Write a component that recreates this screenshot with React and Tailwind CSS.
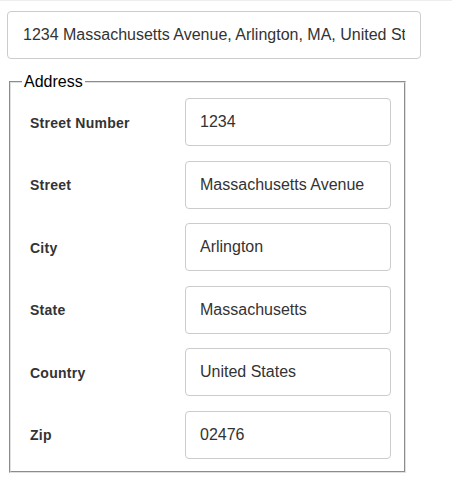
import React from "react";

const fields = [
  { label: "Street Number", value: "1234" },
  { label: "Street", value: "Massachusetts Avenue" },
  { label: "City", value: "Arlington" },
  { label: "State", value: "Massachusetts" },
  { label: "Country", value: "United States" },
  { label: "Zip", value: "02476" },
];

const App = () => {
  return (
    <div className="w-[452px] h-[490px] bg-white border-t border-[#eeeeee] font-['Liberation_Sans',Arial,sans-serif] text-[#333]">
      <div className="pt-[10px] pl-[7px]">
        <input
          readOnly
          value="1234 Massachusetts Avenue, Arlington, MA, United States, 02476"
          className="w-[414px] h-[48px] px-[15px] text-[16px] text-[#333] border border-[#cccccc] rounded-[4px] outline-none"
        />
      </div>

      {/* address breakdown */}
      <fieldset className="mt-[14px] ml-[9px] w-[397px] border-2 [border-style:groove] border-[#e0e0e0] pl-[19px] pr-[13px] pt-[7px] pb-[12px]">
        <legend className="-ml-[8px] px-[2px] text-[16px] leading-[18px] text-black">Address</legend>
        <div className="flex flex-col gap-[14.6px]">
          {fields.map((f) => (
            <div key={f.label} className="flex items-center">
              <label className="w-[155px] text-[14px] font-bold tracking-[0.25px] text-[#333] pt-[2px]">{f.label}</label>
              <input
                readOnly
                value={f.value}
                className="w-[206px] h-[48px] px-[14px] text-[16px] text-[#333] border border-[#cccccc] rounded-[4px] outline-none"
              />
            </div>
          ))}
        </div>
      </fieldset>
    </div>
  );
};

export default App;
